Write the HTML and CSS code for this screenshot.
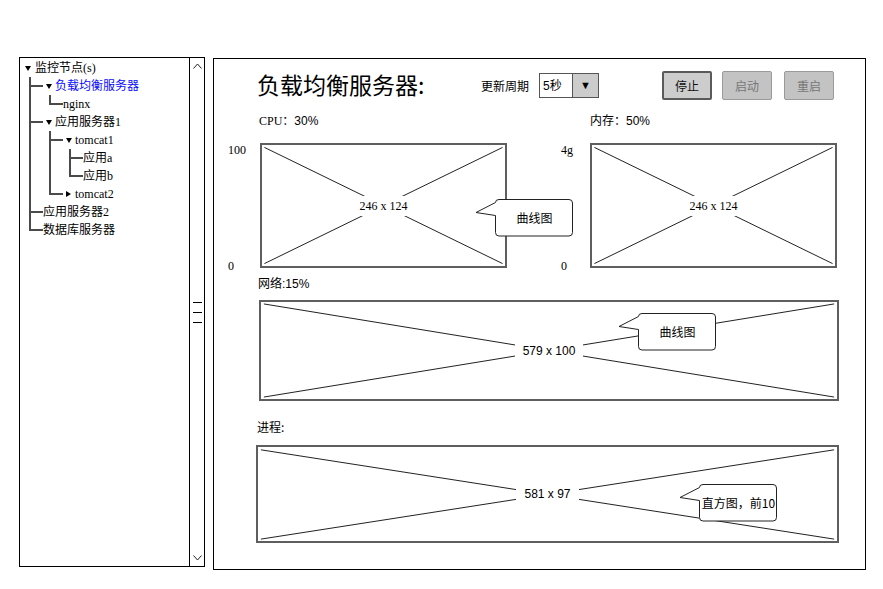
FILE: index.html
```
<!DOCTYPE html>
<html>
<head>
  <title>负载均衡服务器</title>
<link rel="stylesheet" href="styles.css">
</head>
<body>
  <div class="page">
    <div class="tree">
      <ul class="nodes">
        <li class="root">
          <div class="row"><span class="tg open"></span>监控节点(s)</div>
          <ul class="sub">
            <li>
              <div class="row"><span class="tg open"></span><span class="sel">负载均衡服务器</span></div>
              <ul class="sub">
                <li class="leaf"><div class="row">nginx</div></li>
              </ul>
            </li>
            <li>
              <div class="row"><span class="tg open"></span>应用服务器1</div>
              <ul class="sub">
                <li>
                  <div class="row"><span class="tg open"></span>tomcat1</div>
                  <ul class="sub">
                    <li class="leaf"><div class="row">应用a</div></li>
                    <li class="leaf"><div class="row">应用b</div></li>
                  </ul>
                </li>
                <li><div class="row"><span class="tg shut"></span>tomcat2</div></li>
              </ul>
            </li>
            <li class="leaf"><div class="row">应用服务器2</div></li>
            <li class="leaf"><div class="row">数据库服务器</div></li>
          </ul>
        </li>
      </ul>
      <div class="scroll">
        <svg class="chev" width="9" height="6" viewBox="0 0 9 6"><polyline points="0.5,5.5 4.5,1 8.5,5.5" fill="none" stroke="#222" stroke-width="1"/></svg>
        <div class="thumb"><i></i><i></i><i></i></div>
        <svg class="chev" width="9" height="6" viewBox="0 0 9 6"><polyline points="0.5,0.5 4.5,5 8.5,0.5" fill="none" stroke="#222" stroke-width="1"/></svg>
      </div>
    </div>

    <div class="main">
      <div class="head">
        <div class="title">负载均衡服务器:</div>
        <div class="period">更新周期</div>
        <div class="select"><span class="val">5秒</span><span class="arrow">▼</span></div>
        <div class="btns">
          <button class="btn">停止</button>
          <button class="btn off b2">启动</button>
          <button class="btn off b3">重启</button>
        </div>
      </div>

      <div class="labels">
        <div class="cpu">CPU：<span class="sans">30%</span></div>
        <div class="sans">内存：50%</div>
      </div>

      <div class="pair">
        <div class="axis"><span>100</span><span>0</span></div>
        <div class="ph c1">
          <svg viewBox="0 0 100 100" preserveAspectRatio="none"><line x1="1" y1="2" x2="99" y2="98"/><line x1="1" y1="98" x2="99" y2="2"/></svg>
          <span class="dim">246 x 124</span>
          <div class="callout k1">
            <svg width="100" height="38" viewBox="0 0 100 38"><path d="M25,0.5 H95 Q98.5,0.5 98.5,4 V33.5 Q98.5,37 95,37 H25 Q21.5,37 21.5,33.5 V16.5 L2,13.5 L21.5,3.5 Q21.5,0.5 25,0.5 Z"/></svg>
            <span class="note">曲线图</span>
          </div>
        </div>
        <div class="axis ax2"><span>4g</span><span>0</span></div>
        <div class="ph c2">
          <svg viewBox="0 0 100 100" preserveAspectRatio="none"><line x1="1" y1="2" x2="99" y2="98"/><line x1="1" y1="98" x2="99" y2="2"/></svg>
          <span class="dim">246 x 124</span>
        </div>
      </div>

      <div class="sec net sans">网络:15%</div>
      <div class="ph c3">
        <svg viewBox="0 0 100 100" preserveAspectRatio="none"><line x1="0.5" y1="2" x2="99.5" y2="98"/><line x1="0.5" y1="98" x2="99.5" y2="2"/></svg>
        <span class="dim sans">579 x 100</span>
        <div class="callout k2">
          <svg width="100" height="38" viewBox="0 0 100 38"><path d="M25,0.5 H95 Q98.5,0.5 98.5,4 V33.5 Q98.5,37 95,37 H25 Q21.5,37 21.5,33.5 V16.5 L2,13.5 L21.5,3.5 Q21.5,0.5 25,0.5 Z"/></svg>
          <span class="note">曲线图</span>
        </div>
      </div>

      <div class="sec proc">进程:</div>
      <div class="ph c4">
        <svg viewBox="0 0 100 100" preserveAspectRatio="none"><line x1="0.5" y1="3" x2="99.5" y2="98"/><line x1="0.5" y1="98" x2="99.5" y2="3"/></svg>
        <span class="dim sans">581 x 97</span>
        <div class="callout k3">
          <svg width="100" height="38" viewBox="0 0 100 38"><path d="M25,0.5 H95 Q98.5,0.5 98.5,4 V33.5 Q98.5,37 95,37 H25 Q21.5,37 21.5,33.5 V16.5 L2,13.5 L21.5,3.5 Q21.5,0.5 25,0.5 Z"/></svg>
          <span class="note">直方图，前10</span>
        </div>
      </div>
    </div>
  </div>
</body>
</html>
```

FILE: styles.css
```
body {
  margin: 0;
  background: #fff;
  color: #000;
  font-family: "Liberation Serif", "Noto Sans CJK SC", serif;
  font-size: 12px;
}
.sans {
  font-family: "Liberation Sans", "Noto Sans CJK SC", sans-serif;
}
.page {
  display: flex;
  align-items: flex-start;
  gap: 8px;
  padding: 57px 0 0 19px;
}

/* tree */
.tree {
  display: flex;
  width: 184px;
  height: 508px;
  border: 1px solid #000;
}
.tree ul {
  list-style: none;
  margin: 0;
  padding: 0;
}
.nodes {
  flex: 1;
  padding-top: 1px !important;
}
.row {
  display: flex;
  align-items: center;
  height: 18px;
  line-height: 18px;
  white-space: nowrap;
}
.root > .row {
  padding-left: 3px;
}
.root > .row .tg {
  margin-right: 3px;
}
.root > .sub {
  margin-left: 9px;
}
.sub .sub {
  margin-left: 20px;
}
.sub > li {
  position: relative;
}
.sub > li > .row {
  padding-left: 15px;
}
.sub > li.leaf > .row {
  padding-left: 14px;
}
.sub > li::before {
  content: "";
  position: absolute;
  left: 0;
  top: 8px;
  width: 14px;
  border-top: 2px solid #4a4a4a;
}
.sub > li::after {
  content: "";
  position: absolute;
  left: 0;
  top: 0;
  bottom: 0;
  border-left: 2px solid #4a4a4a;
}
.sub > li:last-child::after {
  bottom: auto;
  height: 10px;
}
.tg {
  display: flex;
  justify-content: center;
  width: 9px;
  margin-right: 2px;
}
.tg.open::before {
  content: "";
  border-left: 3px solid transparent;
  border-right: 3px solid transparent;
  border-top: 5px solid #000;
}
.tg.shut::before {
  content: "";
  border-top: 3px solid transparent;
  border-bottom: 3px solid transparent;
  border-left: 5px solid #000;
}
.sel {
  color: #0a0aff;
}
.scroll {
  display: flex;
  flex-direction: column;
  justify-content: space-between;
  align-items: center;
  width: 14px;
  border-left: 1px solid #000;
  padding: 5px 0 5px;
}
.thumb {
  display: flex;
  flex-direction: column;
  gap: 9px;
}
.thumb i {
  display: block;
  width: 9px;
  border-top: 1px solid #000;
}

/* main panel */
.main {
  width: 651px;
  height: 510px;
  margin-top: 1px;
  border: 1px solid #000;
}
.head {
  display: flex;
  align-items: center;
  height: 29px;
  margin-top: 12px;
  padding-left: 43px;
}
.title {
  width: 224px;
  margin-top: -3px;
  font-family: "Noto Sans CJK SC", "Liberation Sans", sans-serif;
  font-size: 23px;
  line-height: 29px;
}
.period {
  width: 58px;
  font-family: "Noto Sans CJK SC", sans-serif;
}
.select {
  display: flex;
  width: 58px;
  height: 23px;
  border: 1px solid #555;
  font-family: "Liberation Sans", "Noto Sans CJK SC", sans-serif;
}
.select .val {
  flex: 1;
  padding-left: 3px;
  line-height: 24px;
}
.select .arrow {
  width: 25px;
  border-left: 1px solid #555;
  background: #ccc;
  text-align: center;
  line-height: 23px;
  font-size: 11px;
}
.btns {
  display: flex;
  margin-left: 63px;
}
.btn {
  box-sizing: border-box;
  width: 50px;
  height: 29px;
  padding: 0;
  border: 2px solid #5a5a5a;
  border-radius: 2px;
  background: #cdcdcd;
  color: #111;
  font-family: "Noto Sans CJK SC", sans-serif;
  font-size: 12px;
}
.btn.off {
  border: 1px solid #9a9a9a;
  background: #c3c3c3;
  color: #777;
}
.b2 {
  margin-left: 10px;
}
.b3 {
  margin-left: 12px;
}
.labels {
  display: flex;
  height: 14px;
  line-height: 14px;
  margin-top: 14px;
  padding-left: 45px;
}
.cpu {
  width: 331px;
}
.pair {
  display: flex;
  align-items: flex-start;
  margin-top: 15px;
  padding-left: 14px;
}
.axis {
  display: flex;
  flex-direction: column;
  justify-content: space-between;
  width: 32px;
  height: 130px;
  line-height: 14px;
}
.ax2 {
  width: 29px;
  margin-left: 54px;
}
.sec {
  height: 14px;
  line-height: 14px;
}
.net {
  margin-top: 4px;
  padding-left: 44px;
}
.proc {
  margin-top: 19px;
  padding-left: 43px;
  font-family: "Noto Sans CJK SC", sans-serif;
}

/* placeholders */
.ph {
  position: relative;
  box-sizing: border-box;
  display: grid;
  border: 2px solid #5e5e5e;
  background: #fff;
}
.ph > svg {
  grid-area: 1 / 1;
  width: 100%;
  height: 100%;
}
.ph line {
  stroke: #222;
  stroke-width: 1;
  vector-effect: non-scaling-stroke;
}
.dim {
  grid-area: 1 / 1;
  place-self: center;
  padding: 3px 8px;
  background: #fff;
  line-height: 14px;
}
.c1, .c2 {
  width: 247px;
  height: 125px;
}
.c3 {
  width: 580px;
  height: 101px;
  margin: 9px 0 0 45px;
}
.c4 {
  width: 583px;
  height: 98px;
  margin: 11px 0 0 42px;
}
.callout {
  position: absolute;
  display: grid;
  width: 100px;
  height: 38px;
}
.callout svg {
  grid-area: 1 / 1;
}
.callout path {
  fill: #fff;
  stroke: #222;
  stroke-width: 1;
}
.note {
  grid-area: 1 / 1;
  align-self: center;
  justify-self: center;
  margin-left: 21px;
  font-family: "Noto Sans CJK SC", "Liberation Sans", sans-serif;
  line-height: 14px;
}
.k1 {
  left: 212px;
  top: 54px;
}
.k2 {
  left: 356px;
  top: 11px;
}
.k3 {
  left: 420px;
  top: 37px;
}
```
